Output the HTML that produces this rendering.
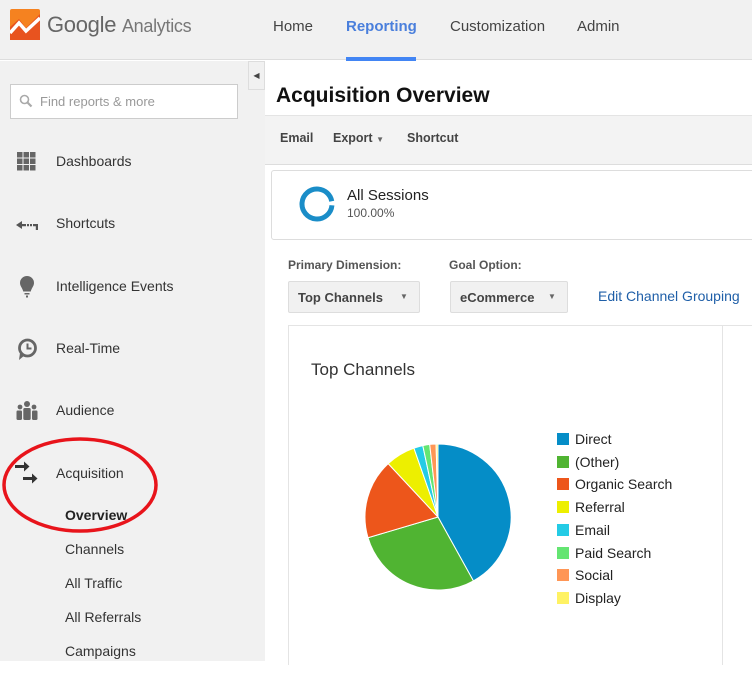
<!DOCTYPE html>
<html><head><meta charset="utf-8"><style>
*{margin:0;padding:0;box-sizing:border-box}
body{width:752px;height:677px;background:#fff;font-family:"Liberation Sans",Arial,sans-serif;position:relative;overflow:hidden}
.a{position:absolute}
.top{left:0;top:0;width:752px;height:60px;background:#f1f1f1;border-bottom:1px solid #ddd}
.nav{top:18px;font-size:15px;color:#444}
.side{left:0;top:61px;width:265px;height:600px;background:#f1f1f1}
.item{left:56px;font-size:14px;color:#333}
.sub{left:65px;font-size:14px;color:#333}
.ic{left:15px;width:24px;height:24px}
</style></head><body>
<div class="a top"></div>
<svg class="a" style="left:10px;top:9px" width="30" height="31" viewBox="0 0 30 31"><rect width="30" height="31" fill="#f58220" rx="2"/><path d="M0 31 L0 18 L9 10 L16 19 L30 5 L30 31Z" fill="#e8531f"/><path d="M0 24 L9 14 L16 22 L30 9" stroke="#fff" stroke-width="3.5" fill="none"/></svg>
<div class="a" style="left:47px;top:12px;font-size:22px;color:#666;letter-spacing:-0.3px">Google <span style="font-size:18px;color:#777;letter-spacing:-0.3px">Analytics</span></div>
<div class="a nav" style="left:273px">Home</div>
<div class="a nav" style="left:346px;color:#4a7fdc;font-weight:bold">Reporting</div>
<div class="a" style="left:346px;top:57px;width:70px;height:4px;background:#4285f4"></div>
<div class="a nav" style="left:450px">Customization</div>
<div class="a nav" style="left:577px">Admin</div>

<div class="a side"></div>
<div class="a" style="left:248px;top:61px;width:17px;height:29px;border:1px solid #ddd;background:#f1f1f1;font-size:8px;color:#444;text-align:center;line-height:28px">◀</div>
<div class="a" style="left:10px;top:84px;width:228px;height:35px;border:1px solid #ccc;background:#fff"></div>
<svg class="a" style="left:19px;top:94px" width="14" height="14"><circle cx="5.5" cy="5.5" r="4" stroke="#aaa" stroke-width="1.6" fill="none"/><path d="M8.5 8.5L12.5 12.5" stroke="#aaa" stroke-width="2.2"/></svg>
<div class="a" style="left:40px;top:94px;font-size:13px;color:#999">Find reports &amp; more</div>

<svg class="a ic" style="top:150px" viewBox="0 0 24 24"><g fill="#666"><rect x="2" y="2" width="5.5" height="5.5"/><rect x="8.5" y="2" width="5.5" height="5.5"/><rect x="15" y="2" width="5.5" height="5.5"/><rect x="2" y="8.5" width="5.5" height="5.5"/><rect x="8.5" y="8.5" width="5.5" height="5.5"/><rect x="15" y="8.5" width="5.5" height="5.5"/><rect x="2" y="15" width="5.5" height="5.5"/><rect x="8.5" y="15" width="5.5" height="5.5"/><rect x="15" y="15" width="5.5" height="5.5"/></g></svg>
<div class="a item" style="top:153px">Dashboards</div>
<svg class="a ic" style="top:213px" viewBox="0 0 24 24"><path d="M1 12L7 8V16Z M6 11H11V13.2H6Z M12 11h2v2.2h-2z M15 11h2v2.2h-2z M18 11h5v6h-2.2v-3.8H18z" fill="#555"/></svg>
<div class="a item" style="top:215px">Shortcuts</div>
<svg class="a ic" style="top:275px" viewBox="0 0 24 24"><path d="M12 1a7 7 0 0 1 7 7c0 3.2-2.7 5.4-3.2 8.5h-7.6C7.7 13.4 5 11.2 5 8a7 7 0 0 1 7-7z M9.5 18h5v1.5h-5z M11 20.5h2v2h-2z" fill="#666"/></svg>
<div class="a item" style="top:278px">Intelligence Events</div>
<svg class="a ic" style="top:337px" viewBox="0 0 24 24"><circle cx="12.5" cy="11" r="8" stroke="#666" stroke-width="2.8" fill="none"/><path d="M5 16L4 23 10 18z" fill="#666"/><path d="M12.5 6.5v5h4" stroke="#666" stroke-width="2" fill="none"/></svg>
<div class="a item" style="top:340px">Real-Time</div>
<svg class="a ic" style="top:399px" viewBox="0 0 24 24"><g fill="#666"><circle cx="12" cy="5" r="3"/><circle cx="5" cy="8" r="2.4"/><circle cx="19" cy="8" r="2.4"/><rect x="8.3" y="9" width="7.4" height="12" rx="1.5"/><rect x="1.5" y="11.5" width="5.5" height="9.5" rx="1.2"/><rect x="17" y="11.5" width="5.5" height="9.5" rx="1.2"/></g></svg>
<div class="a item" style="top:402px">Audience</div>
<svg class="a" style="left:14px;top:460px;width:26px;height:28px" viewBox="0 0 26 28"><path d="M1 5h9V1.5l5.5 5-5.5 5V8H1z M9 17h9v-3.5l5.5 5-5.5 5V20H9z" fill="#333"/></svg>
<div class="a item" style="top:465px">Acquisition</div>
<div class="a sub" style="top:507px;font-weight:bold;color:#222">Overview</div>
<div class="a sub" style="top:541px">Channels</div>
<div class="a sub" style="top:575px">All Traffic</div>
<div class="a sub" style="top:609px">All Referrals</div>
<div class="a sub" style="top:643px">Campaigns</div>
<svg class="a" style="left:0;top:435px" width="162" height="100"><ellipse cx="80" cy="50" rx="76" ry="46" stroke="#e8141b" stroke-width="3.5" fill="none"/></svg>

<div class="a" style="left:276px;top:84px;font-size:21px;font-weight:bold;color:#111">Acquisition Overview</div>
<div class="a" style="left:265px;top:115px;width:487px;height:50px;background:#f3f3f3;border-top:1px solid #e4e4e4;border-bottom:1px solid #ddd"></div>
<div class="a" style="left:280px;top:131px;font-size:12.5px;font-weight:bold;color:#444">Email</div>
<div class="a" style="left:333px;top:131px;font-size:12.5px;font-weight:bold;color:#444">Export <span style="font-size:8px;color:#666">▼</span></div>
<div class="a" style="left:407px;top:131px;font-size:12.5px;font-weight:bold;color:#444">Shortcut</div>

<div class="a" style="left:271px;top:170px;width:500px;height:70px;border:1px solid #ddd;border-radius:3px"></div>
<svg class="a" style="left:299px;top:186px" width="36" height="36"><circle cx="18" cy="18" r="15" stroke="#1a8dc8" stroke-width="5" fill="none" stroke-dasharray="90 4.25" transform="rotate(5 18 18)"/></svg>
<div class="a" style="left:347px;top:187px;font-size:15px;color:#222">All Sessions</div>
<div class="a" style="left:347px;top:206px;font-size:12px;color:#555">100.00%</div>

<div class="a" style="left:288px;top:258px;font-size:12px;font-weight:bold;color:#555">Primary Dimension:</div>
<div class="a" style="left:449px;top:258px;font-size:12px;font-weight:bold;color:#555">Goal Option:</div>
<div class="a" style="left:288px;top:281px;width:132px;height:32px;background:#f1f1f1;border:1px solid #ddd;border-radius:2px"></div>
<div class="a" style="left:298px;top:290px;font-size:13px;font-weight:bold;color:#444">Top Channels</div>
<div class="a" style="left:400px;top:292px;font-size:8px;color:#666">▼</div>
<div class="a" style="left:450px;top:281px;width:118px;height:32px;background:#f1f1f1;border:1px solid #ddd;border-radius:2px"></div>
<div class="a" style="left:460px;top:290px;font-size:13px;font-weight:bold;color:#444">eCommerce</div>
<div class="a" style="left:548px;top:292px;font-size:8px;color:#666">▼</div>
<div class="a" style="left:598px;top:288px;font-size:14px;color:#1f5fa8">Edit Channel Grouping</div>

<div class="a" style="left:288px;top:325px;width:435px;height:340px;border:1px solid #e4e4e4;border-bottom:none"></div>
<div class="a" style="left:722px;top:325px;width:40px;height:340px;border-left:1px solid #e4e4e4;border-top:1px solid #e4e4e4"></div>
<div class="a" style="left:311px;top:360px;font-size:17px;color:#333">Top Channels</div>

<svg class="a" style="left:0;top:0" width="752" height="677"><g stroke="#fff" stroke-width="1">
<path d="M438 517L438 444A73 73 0 0 1 473.4 580.9Z" fill="#058dc7"/>
<path d="M438 517L473.4 580.9A73 73 0 0 1 368 537.7Z" fill="#50b432"/>
<path d="M438 517L368 537.7A73 73 0 0 1 388.2 463.6Z" fill="#ed561b"/>
<path d="M438 517L388.2 463.6A73 73 0 0 1 413.9 448.1Z" fill="#edef00"/>
<path d="M438 517L413.9 448.1A73 73 0 0 1 422.8 445.6Z" fill="#24cbe5"/>
<path d="M438 517L422.8 445.6A73 73 0 0 1 429.7 444.4Z" fill="#64e572"/>
<path d="M438 517L429.7 444.4A73 73 0 0 1 436.1 444Z" fill="#ff9655"/>
<path d="M438 517L436.1 444A73 73 0 0 1 438 444Z" fill="#fff263"/>
</g></svg>
<div class="a" style="left:557px;top:428px;font-size:14px;color:#222;line-height:22.7px">
<div><span style="display:inline-block;width:12px;height:12px;background:#058dc7;margin-right:6px;vertical-align:-1px"></span>Direct</div>
<div><span style="display:inline-block;width:12px;height:12px;background:#50b432;margin-right:6px;vertical-align:-1px"></span>(Other)</div>
<div><span style="display:inline-block;width:12px;height:12px;background:#ed561b;margin-right:6px;vertical-align:-1px"></span>Organic Search</div>
<div><span style="display:inline-block;width:12px;height:12px;background:#edef00;margin-right:6px;vertical-align:-1px"></span>Referral</div>
<div><span style="display:inline-block;width:12px;height:12px;background:#24cbe5;margin-right:6px;vertical-align:-1px"></span>Email</div>
<div><span style="display:inline-block;width:12px;height:12px;background:#64e572;margin-right:6px;vertical-align:-1px"></span>Paid Search</div>
<div><span style="display:inline-block;width:12px;height:12px;background:#ff9655;margin-right:6px;vertical-align:-1px"></span>Social</div>
<div><span style="display:inline-block;width:12px;height:12px;background:#fff263;margin-right:6px;vertical-align:-1px"></span>Display</div>
</div>
</body></html>
